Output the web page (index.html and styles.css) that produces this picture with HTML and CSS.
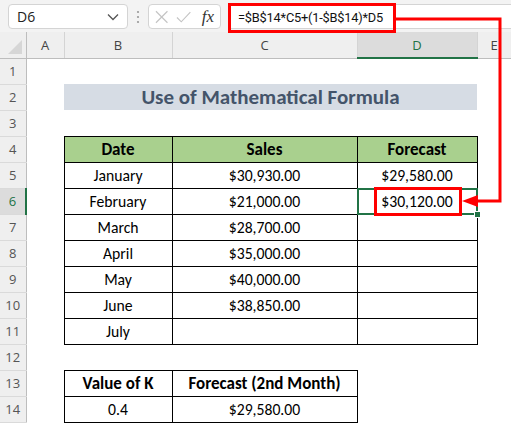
FILE: index.html
```html
<!DOCTYPE html>
<html lang="en">
<head>
    <meta charset="UTF-8">
    <meta name="viewport" content="width=device-width, initial-scale=1.0">
    <title>Use of Mathematical Formula</title>
    <link rel="stylesheet" href="styles.css">
</head>
<body>

    <div class="toolbar">
        <div class="namebox">
            <span>D6</span>
            <svg class="chevron" width="12" height="8" viewBox="0 0 12 8"><path d="M1 1.5 L6 6.5 L11 1.5" fill="none" stroke="#555" stroke-width="1.3"/></svg>
        </div>
        <svg class="grip" width="4" height="14" viewBox="0 0 4 14"><circle cx="2" cy="2" r="1.1" fill="#999"/><circle cx="2" cy="7" r="1.1" fill="#999"/><circle cx="2" cy="12" r="1.1" fill="#999"/></svg>
        <div class="fxbox">
            <svg width="14" height="14" viewBox="0 0 14 14"><path d="M1 1 L13 13 M13 1 L1 13" stroke="#c4c4c4" stroke-width="1.2"/></svg>
            <svg width="16" height="14" viewBox="0 0 16 14"><path d="M1 7.5 L5.5 12 L15 2" fill="none" stroke="#c4c4c4" stroke-width="1.2"/></svg>
            <span class="fx">fx</span>
        </div>
        <div class="formula">
            <span class="formula-mark">=$B$14*C5+(1-$B$14)*D5</span>
        </div>
    </div>

    <table class="sheet">
        <colgroup>
            <col class="c-rh"><col class="c-a"><col class="c-b"><col class="c-c"><col class="c-d"><col class="c-e">
        </colgroup>
        <thead>
            <tr>
                <th class="corner"><svg width="16" height="16" viewBox="0 0 16 16"><path d="M15 1 L15 15 L1 15 Z" fill="#d6d6d6"/></svg></th>
                <th>A</th><th>B</th><th>C</th><th class="hl">D</th><th>E</th>
            </tr>
        </thead>
        <tbody>
            <tr><td class="rh">1</td><td></td><td></td><td></td><td></td><td></td></tr>
            <tr><td class="rh">2</td><td></td><td colspan="3" class="title">Use of Mathematical Formula</td><td></td></tr>
            <tr><td class="rh">3</td><td></td><td></td><td></td><td></td><td></td></tr>
            <tr><td class="rh">4</td><td></td><td class="t head">Date</td><td class="t head">Sales</td><td class="t head">Forecast</td><td></td></tr>
            <tr><td class="rh">5</td><td></td><td class="t">January</td><td class="t">$30,930.00</td><td class="t">$29,580.00</td><td></td></tr>
            <tr><td class="rh hl">6</td><td></td><td class="t">February</td><td class="t">$21,000.00</td><td class="t sel">$30,120.00<span class="mark"></span><span class="handle"></span></td><td></td></tr>
            <tr><td class="rh">7</td><td></td><td class="t">March</td><td class="t">$28,700.00</td><td class="t"></td><td></td></tr>
            <tr><td class="rh">8</td><td></td><td class="t">April</td><td class="t">$35,000.00</td><td class="t"></td><td></td></tr>
            <tr><td class="rh">9</td><td></td><td class="t">May</td><td class="t">$40,000.00</td><td class="t"></td><td></td></tr>
            <tr><td class="rh">10</td><td></td><td class="t">June</td><td class="t">$38,850.00</td><td class="t"></td><td></td></tr>
            <tr><td class="rh">11</td><td></td><td class="t">July</td><td class="t"></td><td class="t"></td><td></td></tr>
            <tr><td class="rh">12</td><td></td><td></td><td></td><td></td><td></td></tr>
            <tr><td class="rh">13</td><td></td><td class="t bold">Value of K</td><td class="t bold">Forecast (2nd Month)</td><td></td><td></td></tr>
            <tr><td class="rh">14</td><td></td><td class="t">0.4</td><td class="t">$29,580.00</td><td></td><td></td></tr>
            <tr><td class="rh"></td><td></td><td></td><td></td><td></td><td></td></tr>
        </tbody>
    </table>

    <svg class="arrow" width="511" height="423" viewBox="0 0 511 423">
        <path d="M396 19 H500 V201 H476" fill="none" stroke="#ff0000" stroke-width="3"/>
        <path d="M462 201 L478 195 L478 207 Z" fill="#ff0000"/>
    </svg>

</body>
</html>
```

FILE: styles.css
```css
* { box-sizing: border-box; margin: 0; padding: 0; }
body {
    width: 511px;
    height: 423px;
    overflow: hidden;
    position: relative;
    background: #fff;
    font-family: "Segoe UI", "Open Sans", "Noto Sans", sans-serif;
}

/* formula bar */
.toolbar {
    display: flex;
    align-items: flex-start;
    height: 32px;
    padding-top: 4px;
    background: #f3f3f3;
}

.namebox {
    display: flex;
    align-items: center;
    justify-content: space-between;
    width: 120px;
    height: 25px;
    margin-left: 8px;
    padding: 0 8px 0 8px;
    background: #fff;
    border: 1px solid #d4d4d4;
    border-radius: 4px;
    font-size: 14px;
    color: #222;
}

.grip { margin: 6px 0 0 8px; }

.fxbox {
    display: flex;
    align-items: center;
    gap: 8px;
    width: 73px;
    height: 25px;
    margin-left: 8px;
    padding: 0 6px 0 6px;
    background: #fff;
    border: 1px solid #d4d4d4;
    border-radius: 4px;
}

.fx {
    margin-left: 2px;
    font-family: "Liberation Serif", serif;
    font-style: italic;
    font-size: 17px;
    color: #333;
}

.formula {
    flex: 1;
    height: 25px;
    margin-left: 7px;
    background: #fff;
    border-top: 1px solid #d4d4d4;
    border-bottom: 1px solid #d4d4d4;
}

.formula-mark {
    display: inline-block;
    width: 168px;
    height: 30px;
    margin-top: -2px;
    padding: 4px 0 0 7px;
    border: 3px solid #ff0000;
    font-family: "Roboto", sans-serif;
    font-size: 12.8px;
    letter-spacing: -0.2px;
    color: #111;
    white-space: nowrap;
}

/* sheet grid */
.sheet {
    width: 511px;
    table-layout: fixed;
    border-collapse: collapse;
    font-family: "Carlito", "Lato", sans-serif;
    font-size: 15.7px;
    color: #000;
}

.c-rh { width: 26px; }
.c-a { width: 38px; }
.c-b { width: 108px; }
.c-c { width: 185px; }
.c-d { width: 120px; }
.c-e { width: 34px; }

.sheet th {
    height: 24px;
    background: #efefef;
    border-right: 1px solid #d4d4d4;
    border-bottom: 1px solid #bdbdbd;
    font-family: "Segoe UI", "Open Sans", sans-serif;
    font-weight: normal;
    font-size: 13px;
    color: #444;
}

.sheet th.corner { position: relative; border-right: 1px solid #bdbdbd; }
.corner svg { position: absolute; right: 3px; bottom: 3px; }

.sheet th.hl {
    background: #dcdcdc;
    color: #217346;
    border-bottom: 2px solid #217346;
}

.sheet tr { height: 26px; }

.sheet td { text-align: center; white-space: nowrap; }

.sheet td.rh {
    background: #efefef;
    border-right: 1px solid #bdbdbd;
    border-bottom: 1px solid #dadada;
    font-family: "Segoe UI", "Open Sans", sans-serif;
    font-size: 13px;
    color: #555;
}

.sheet td.rh.hl {
    background: #dcdcdc;
    color: #217346;
    border-right: 2px solid #217346;
}

.title {
    background: #d6dce4;
    color: #44546a;
    font-weight: bold;
    font-size: 21px;
}

.t { border: 1px solid #000; }
.head { background: #a9d08e; font-weight: bold; font-size: 17px; }
.bold { font-weight: bold; font-size: 17px; }

/* selected cell and annotations */
.sel { position: relative; }
.sel::after {
    content: "";
    position: absolute;
    left: -1px; top: -1px; right: -1px; bottom: -1px;
    border: 2px solid #217346;
}

.mark {
    position: absolute;
    left: 16px; right: 15px; top: -2px; bottom: -2px;
    border: 3px solid #ff0000;
    z-index: 1;
}

.handle {
    position: absolute;
    right: -4px;
    bottom: -4px;
    width: 7px;
    height: 7px;
    background: #217346;
    border: 1px solid #fff;
    z-index: 2;
}

.arrow {
    position: absolute;
    left: 0;
    top: 0;
    pointer-events: none;
}
```
